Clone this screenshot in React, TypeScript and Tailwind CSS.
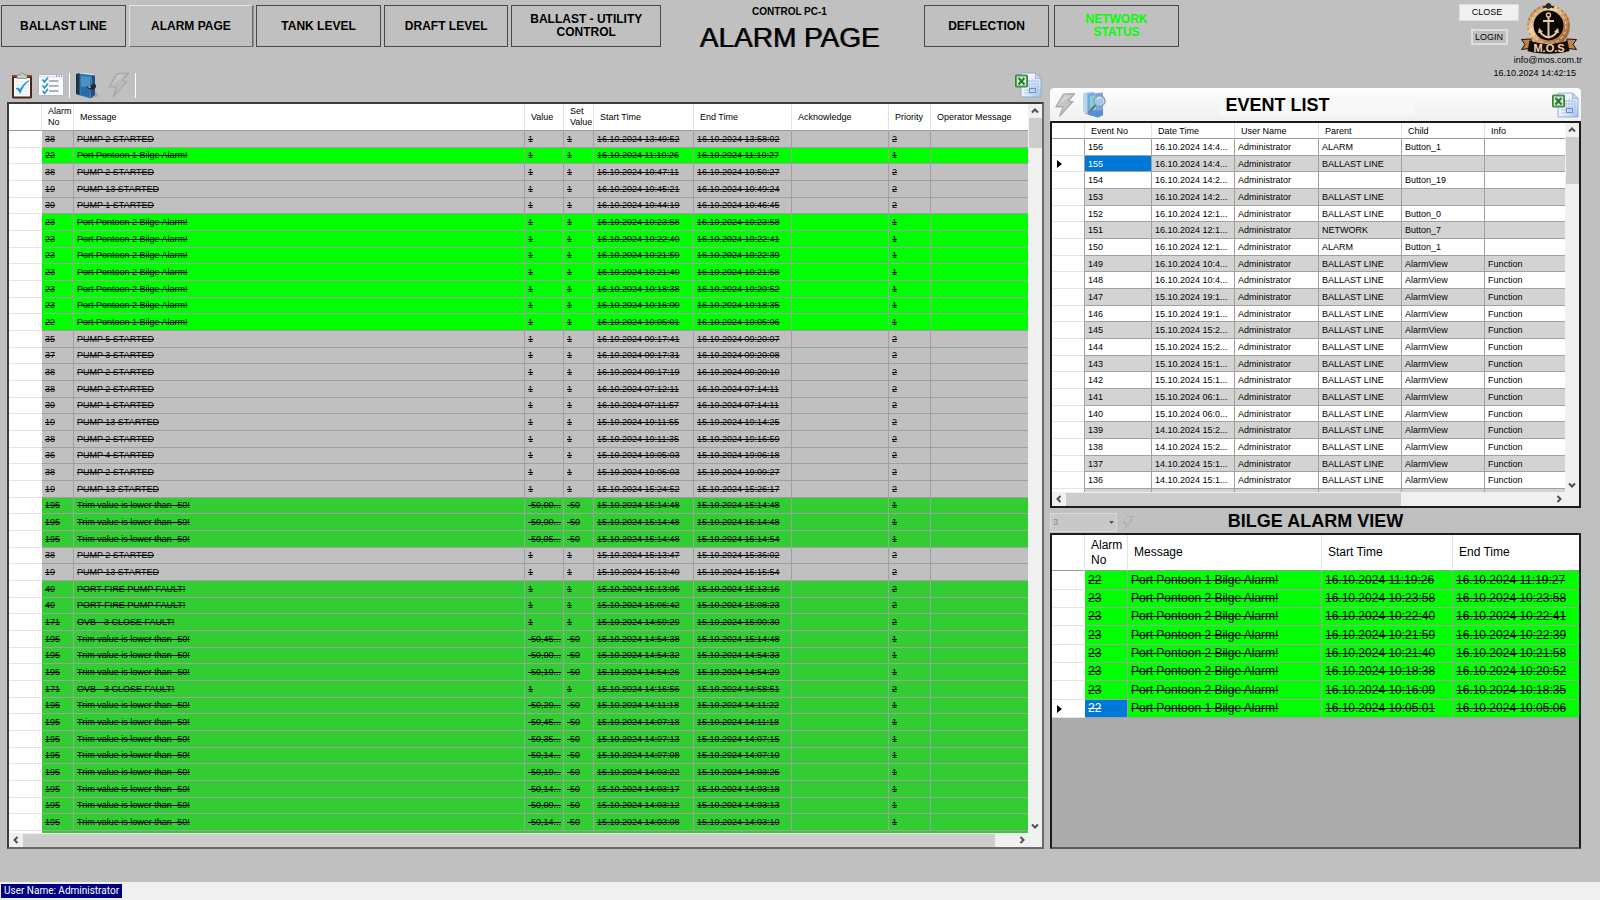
import React from "react";

type Tone = "idle" | "lime" | "green";
type Alarm = [no: string, message: string, value: string, set: string, start: string, end: string, priority: string, tone: Tone];

const pump = (no: string, n: number, start: string, end: string): Alarm => [no, `PUMP ${n} STARTED`, "1", "1", start, end, "2", "idle"];
const bilge = (no: string, n: number, start: string, end: string): Alarm => [no, `Port Pontoon ${n} Bilge Alarm!`, "1", "1", start, end, "1", "lime"];
const fault = (no: string, what: string, start: string, end: string): Alarm => [no, `${what} FAULT!`, "1", "1", start, end, "2", "green"];
const trim = (value: string, start: string, end: string): Alarm => ["195", "Trim value is lower than -50!", value, "-50", start, end, "1", "green"];

const alarms: Alarm[] = [
  pump("38", 2, "16.10.2024 13:49:52", "16.10.2024 13:58:02"),
  bilge("22", 1, "16.10.2024 11:19:26", "16.10.2024 11:19:27"),
  pump("38", 2, "16.10.2024 10:47:11", "16.10.2024 10:50:27"),
  pump("19", 13, "16.10.2024 10:45:21", "16.10.2024 10:49:24"),
  pump("39", 1, "16.10.2024 10:44:19", "16.10.2024 10:46:45"),
  bilge("23", 2, "16.10.2024 10:23:58", "16.10.2024 10:23:58"),
  bilge("23", 2, "16.10.2024 10:22:40", "16.10.2024 10:22:41"),
  bilge("23", 2, "16.10.2024 10:21:59", "16.10.2024 10:22:39"),
  bilge("23", 2, "16.10.2024 10:21:40", "16.10.2024 10:21:58"),
  bilge("23", 2, "16.10.2024 10:18:38", "16.10.2024 10:20:52"),
  bilge("23", 2, "16.10.2024 10:16:09", "16.10.2024 10:18:35"),
  bilge("22", 1, "16.10.2024 10:05:01", "16.10.2024 10:05:06"),
  pump("35", 5, "16.10.2024 09:17:41", "16.10.2024 09:20:07"),
  pump("37", 3, "16.10.2024 09:17:31", "16.10.2024 09:20:08"),
  pump("38", 2, "16.10.2024 09:17:19", "16.10.2024 09:20:10"),
  pump("38", 2, "16.10.2024 07:12:11", "16.10.2024 07:14:11"),
  pump("39", 1, "16.10.2024 07:11:57", "16.10.2024 07:14:11"),
  pump("19", 13, "15.10.2024 19:11:55", "15.10.2024 19:14:25"),
  pump("38", 2, "15.10.2024 19:11:35", "15.10.2024 19:16:59"),
  pump("36", 4, "15.10.2024 19:05:03", "15.10.2024 19:06:18"),
  pump("38", 2, "15.10.2024 19:05:03", "15.10.2024 19:09:27"),
  pump("19", 13, "15.10.2024 15:24:52", "15.10.2024 15:26:17"),
  trim("-50,00...", "15.10.2024 15:14:48", "15.10.2024 15:14:48"),
  trim("-50,00...", "15.10.2024 15:14:48", "15.10.2024 15:14:48"),
  trim("-50,05...", "15.10.2024 15:14:48", "15.10.2024 15:14:54"),
  pump("38", 2, "15.10.2024 15:13:47", "15.10.2024 15:36:02"),
  pump("19", 13, "15.10.2024 15:13:40", "15.10.2024 15:15:54"),
  fault("49", "PORT FIRE PUMP", "15.10.2024 15:13:06", "15.10.2024 15:13:16"),
  fault("49", "PORT FIRE PUMP", "15.10.2024 15:06:42", "15.10.2024 15:08:23"),
  fault("171", "OVB - 3 CLOSE", "15.10.2024 14:59:29", "15.10.2024 15:00:30"),
  trim("-50,45...", "15.10.2024 14:54:38", "15.10.2024 15:14:48"),
  trim("-50,00...", "15.10.2024 14:54:32", "15.10.2024 14:54:33"),
  trim("-50,10...", "15.10.2024 14:54:26", "15.10.2024 14:54:29"),
  fault("171", "OVB - 3 CLOSE", "15.10.2024 14:16:56", "15.10.2024 14:58:51"),
  trim("-50,29...", "15.10.2024 14:11:18", "15.10.2024 14:11:22"),
  trim("-50,45...", "15.10.2024 14:07:18", "15.10.2024 14:11:18"),
  trim("-50,35...", "15.10.2024 14:07:13", "15.10.2024 14:07:15"),
  trim("-50,14...", "15.10.2024 14:07:08", "15.10.2024 14:07:10"),
  trim("-50,19...", "15.10.2024 14:03:22", "15.10.2024 14:03:25"),
  trim("-50,14...", "15.10.2024 14:03:17", "15.10.2024 14:03:18"),
  trim("-50,09...", "15.10.2024 14:03:12", "15.10.2024 14:03:13"),
  trim("-50,14...", "15.10.2024 14:03:08", "15.10.2024 14:03:10"),
];

const bilgeAlarms = alarms.filter((a) => a[7] === "lime");

const view = (no: string, time: string) => [no, time, "Administrator", "BALLAST LINE", "AlarmView", "Function"];
const events: string[][] = [
  ["156", "16.10.2024 14:4...", "Administrator", "ALARM", "Button_1", ""],
  ["155", "16.10.2024 14:4...", "Administrator", "BALLAST LINE", "", ""],
  ["154", "16.10.2024 14:2...", "Administrator", "", "Button_19", ""],
  ["153", "16.10.2024 14:2...", "Administrator", "BALLAST LINE", "", ""],
  ["152", "16.10.2024 12:1...", "Administrator", "BALLAST LINE", "Button_0", ""],
  ["151", "16.10.2024 12:1...", "Administrator", "NETWORK", "Button_7", ""],
  ["150", "16.10.2024 12:1...", "Administrator", "ALARM", "Button_1", ""],
  view("149", "16.10.2024 10:4..."),
  view("148", "16.10.2024 10:4..."),
  view("147", "15.10.2024 19:1..."),
  view("146", "15.10.2024 19:1..."),
  view("145", "15.10.2024 15:2..."),
  view("144", "15.10.2024 15:2..."),
  view("143", "15.10.2024 15:1..."),
  view("142", "15.10.2024 15:1..."),
  view("141", "15.10.2024 06:1..."),
  view("140", "15.10.2024 06:0..."),
  view("139", "14.10.2024 15:2..."),
  view("138", "14.10.2024 15:2..."),
  view("137", "14.10.2024 15:1..."),
  view("136", "14.10.2024 15:1..."),
];

const toneClass: Record<Tone, string> = { idle: "bg-[#c0c0c0]", lime: "bg-[#00ff00]", green: "bg-[#32cd32]" };

function NavButton({ children, className = "", raised = false }: { children: React.ReactNode; className?: string; raised?: boolean }) {
  const edge = raised
    ? "border-t-[#e3e3e3] border-l-[#e3e3e3] border-r-[#696969] border-b-[#696969] shadow-[1px_0_0_#8c8c8c]"
    : "border-[#484848]";
  return (
    <button type="button" className={`flex h-[42px] min-w-0 items-center justify-center border bg-[#c0c0c0] px-3 text-center text-[12px] leading-[13px] font-bold ${edge} ${className}`}>
      {children}
    </button>
  );
}

function Chevron({ dir }: { dir: "up" | "down" | "left" | "right" }) {
  const d = { up: "M4 8.500 7 5.500l3 3", down: "M4 5.500l3 3 3-3", left: "M8.500 4 5.500 7l3 3", right: "M5.500 4l3 3-3 3" }[dir];
  return (
    <svg viewBox="0 0 14 14" className="size-[14px] shrink-0" fill="none" stroke="#505050" strokeWidth="2">
      <path d={d} />
    </svg>
  );
}

function VScroll({ thumb }: { thumb: string }) {
  return (
    <div className="flex w-[14px] shrink-0 flex-col items-center bg-[#f0f0f0]">
      <Chevron dir="up" />
      <div className={`w-[13px] bg-[#cdcdcd] ${thumb}`} />
      <div className="flex-1" />
      <Chevron dir="down" />
    </div>
  );
}

function HScroll({ thumb }: { thumb: string }) {
  return (
    <div className="flex h-[14px] shrink-0 items-center bg-[#f0f0f0] pr-[13px]">
      <Chevron dir="left" />
      <div className="flex h-[13px] min-w-0 flex-1">
        <div className={`bg-[#cdcdcd] ${thumb}`} />
      </div>
      <Chevron dir="right" />
    </div>
  );
}

function Pointer() {
  return (
    <svg viewBox="0 0 5 8" className="ml-[5px] h-2 w-[5px]">
      <path d="M0 0l5 4-5 4z" fill="#000" />
    </svg>
  );
}

function ClipboardIcon() {
  return (
    <svg viewBox="0 0 22 27" className="h-[27px] w-[22px]">
      <rect x="1" y="3" width="20" height="23.5" rx="1.5" fill="#4b2318" />
      <rect x="1" y="3" width="20" height="2" rx="1" fill="#7a4a38" />
      <rect x="3" y="6" width="16" height="18.5" fill="#fbfdff" />
      <path d="M4 10h14M4 13h14M4 16h14M4 19h14M4 22h14" stroke="#d5dde6" strokeWidth=".8" />
      <path d="M6 6.5V3.8c0-.7.5-1 1-1h2c0-2.400 4-2.400 4 0h2c.6 0 1 .3 1 1v2.700z" fill="#c9c9c9" stroke="#808080" strokeWidth=".7" />
      <path d="M5 16.500c2 1 3 2.600 4.200 4.800C11 16 13.500 12 18 8.500c-3.500 1.500-6.500 5-8.800 9C8 16.500 6.800 15.800 5 16.500z" fill="#1e8fe0" stroke="#1e8fe0" strokeWidth=".8" />
    </svg>
  );
}

function ChecklistIcon() {
  return (
    <svg viewBox="0 0 26 22" className="h-[22px] w-[26px]">
      <rect x=".5" y=".5" width="25" height="21" rx="1" fill="#fbfcfd" stroke="#b4b8bd" />
      <path d="M1 2.500h24" stroke="#dfe3e8" strokeWidth="1.500" />
      <path d="M18 2h1.200M20.500 2h1.200M23 2h1.200" stroke="#4a6fa0" strokeWidth="1.200" />
      <path d="M4.500 5.500 6.500 8 10 3.500M4.500 11.500 6.500 14 10 9.500M4.500 17 6.500 19.500 10 15" fill="none" stroke="#2490dc" strokeWidth="1.700" />
      <path d="M11 7h9.500M11 12h9.500M11 17h9.500" stroke="#606a74" strokeWidth="1.100" />
    </svg>
  );
}

function BookIcon() {
  return (
    <svg viewBox="0 0 23 27" className="h-[27px] w-[23px]">
      <path d="M14 26l8.500-1.500v-3L18 19z" fill="#000" opacity=".15" />
      <path d="M4 .8 15 1.500l5 1.500v20l-5 3.500-11-3z" fill="#dbe6ee" />
      <path d="M4 1.500 17 3 15.500 26.500 4 23.200z" fill="#2f77b0" />
      <path d="M6 4l9.500 1-.8 8.500L6 15z" fill="#5ba2d2" opacity=".65" />
      <path d="M6 16l8.500-1-.5 10-8-2z" fill="#1f5f98" opacity=".5" />
      <path d="M1 2 4.500 1v22.300L1 22z" fill="#20303e" />
      <path d="M17 3 20 3.500v19.500l-4.500 3.500z" fill="#1d4f7c" />
      <path d="M12 14.800c2.500-.3 4-1.300 6-2.800 2-.8 3.500 1 3 3-.3 1.500-2 2-4 2.500-2.500.5-4.500-.7-5-2.700z" fill="#25292e" />
      <circle cx="14.500" cy="15" r="1.200" fill="#9aa5b0" />
    </svg>
  );
}

function BoltIcon({ className, faint = false }: { className: string; faint?: boolean }) {
  return (
    <svg viewBox="0 0 23 26" className={className}>
      <path d="M10 1.500 21.500 1 15 9l5 .3L6 24.500 9.500 15 2 15z" fill={faint ? "#bcbcbc" : "#c4c4c4"} stroke={faint ? "#a6a6a6" : "#a8a8a8"} strokeWidth="1.200" strokeLinejoin="round" />
      <path d="M10.800 3 17.500 2.700 5 13.300z" fill="#fff" opacity={faint ? 0.2 : 0.3} />
    </svg>
  );
}

function ExcelIcon() {
  return (
    <svg viewBox="0 0 27 26" className="h-[26px] w-[27px]">
      <defs>
        <linearGradient id="sheet" x1="0" y1="0" x2="1" y2="1">
          <stop offset="0" stopColor="#ffffff" />
          <stop offset=".6" stopColor="#e2edfb" />
          <stop offset="1" stopColor="#9dbde9" />
        </linearGradient>
      </defs>
      <path d="M6 1h14.500L26 6.500V25H6z" fill="url(#sheet)" stroke="#8da9cf" strokeWidth=".9" />
      <path d="M20.500 1v5.500H26z" fill="#c7dbf5" stroke="#8da9cf" strokeWidth=".7" />
      <path d="M13 9h10M13 12h10M13 15h10M9 18h14M9 21h14M14 8v13M17 7v14M20 7v14M23 8v13" stroke="#a3bde3" strokeWidth=".8" />
      <rect x="14.500" y="16.500" width="6" height="4" fill="none" stroke="#6f93c9" />
      <rect x=".5" y="3" width="12" height="12" rx=".8" fill="#58a05c" stroke="#3b8142" />
      <rect x="2" y="4.500" width="9" height="9" fill="#d3e8cf" />
      <path d="M3.500 6l6 6.500M9.300 6 3.500 12.500" stroke="#2a7a33" strokeWidth="2" />
    </svg>
  );
}

function BookSearchIcon() {
  return (
    <svg viewBox="0 0 25 27" className="h-[27px] w-[25px]">
      <path d="M2 2 12 1v24L3 23z" fill="#8fb9e2" />
      <path d="M1 3 5 2v20l-4-1z" fill="#bcd3ec" />
      <path d="M6 3l15-1.500V24l-5 2.500L6 23.500z" fill="#79a9dc" />
      <path d="M8 5l6-.5v14L8 19z" fill="#7fd2d6" />
      <path d="M6 20l15-1v5l-5 2.500L6 23.500z" fill="#5a8fd0" />
      <path d="M13.500 14 8.500 19.500" stroke="#6a6f78" strokeWidth="2" strokeLinecap="round" />
      <circle cx="17.500" cy="10" r="5.500" fill="#b9d3ee" fillOpacity=".7" stroke="#8b97a8" strokeWidth="1.300" />
      <path d="M15 8.500c1-2 3-2.500 4.500-1.500" stroke="#fff" fill="none" />
    </svg>
  );
}

function Logo() {
  return (
    <svg viewBox="0 0 56 51" className="h-[51px] w-[56px]">
      <defs>
        <linearGradient id="bronze" x1="0" y1="0" x2="1" y2="1">
          <stop offset="0" stopColor="#a06a36" />
          <stop offset=".35" stopColor="#f3cfa0" />
          <stop offset=".6" stopColor="#c98f56" />
          <stop offset="1" stopColor="#8a5526" />
        </linearGradient>
      </defs>
      <circle cx="27.500" cy="23" r="21.500" fill="url(#bronze)" />
      <circle cx="27.500" cy="23" r="20.500" fill="none" stroke="#7a4a22" strokeWidth="1.500" strokeDasharray="2 3" opacity=".45" />
      <circle cx="27.500" cy="23" r="17.500" fill="none" stroke="#fbe3c0" strokeWidth="1.500" strokeDasharray="3 2.500" opacity=".55" />
      <circle cx="27.500" cy="22.500" r="15" fill="#0a0604" />
      <circle cx="27.500" cy="3" r="2.400" fill="#3b3b3b" stroke="#151515" />
      <path d="M22 4.500c3-1.500 8-1.500 11 0" stroke="#222" strokeWidth="2" fill="none" />
      <g fill="none" stroke="#edc79c" strokeWidth="2">
        <circle cx="27.500" cy="12" r="2" strokeWidth="1.400" />
        <path d="M27.500 14V34M22 18h11" />
        <path d="M18.500 27c1 4.500 5 6.500 9 7.500 4-1 8-3 9-7.500" />
      </g>
      <path d="M17 30l1-5 4 4zM38 30l-1-5-4 4z" fill="#edc79c" />
      <path d="M.5 36.500 10 36l2 9-11.500 1.500 3.500-5zM55.500 36.500 46 36l-2 9 11.500 1.500-3.500-5z" fill="#c08246" stroke="#1a0d05" />
      <path d="M8.500 37.500c11 4.500 27 4.500 38 0l2 10.500c-12 3.500-30 3.500-42 0z" fill="#120a05" />
      <text x="28" y="49" textAnchor="middle" fontFamily="Liberation Sans, sans-serif" fontWeight="700" fontSize="11" fill="#f4d7b0">M.O.S</text>
    </svg>
  );
}

const headCell = "border-r border-b border-r-[#e2e2e2] border-b-[#9a9a9a] bg-white pl-[6px] text-left align-middle font-normal last:border-r-0";

function AlarmTable() {
  return (
    <div className="flex min-h-0 flex-1 flex-col border-2 border-[#6a6a6a] border-t-[#3c3c3c] border-l-[#3c3c3c] bg-[#ababab]">
      <div className="flex min-h-0 flex-1">
        <div className="min-w-0 flex-1 overflow-hidden">
          <table className="w-full table-fixed border-separate border-spacing-0 text-[9px] leading-[11px]">
            <colgroup>
              <col className="w-[33px]" />
              <col className="w-8" />
              <col />
              <col className="w-[39px]" />
              <col className="w-[30px]" />
              <col className="w-[100px]" />
              <col className="w-[98px]" />
              <col className="w-[97px]" />
              <col className="w-[42px]" />
              <col className="w-[97px]" />
            </colgroup>
            <thead>
              <tr className="h-[27px] whitespace-nowrap">
                <th className={headCell} aria-label="Row marker" />
                <th className={headCell}>Alarm<br />No</th>
                <th className={headCell}>Message</th>
                <th className={headCell}>Value</th>
                <th className={headCell}>Set<br />Value</th>
                <th className={headCell}>Start Time</th>
                <th className={headCell}>End Time</th>
                <th className={headCell}>Acknowledge</th>
                <th className={headCell}>Priority</th>
                <th className={headCell}>Operator Message</th>
              </tr>
            </thead>
            <tbody>
              {alarms.map(([no, message, value, set, start, end, priority, tone], i) => (
                <tr key={i} className={`whitespace-nowrap ${i % 3 === 1 ? "h-4" : "h-[17px]"}`}>
                  <td className="border-b border-[#e4e4e4] bg-white" />
                  {[no, message, value, set, start, end, "", priority, ""].map((text, c) => (
                    <td key={c} className={`border-r border-b border-[#a0a0a0] pl-[3px] line-through last:border-r-0 ${toneClass[tone]}`}>
                      {text}
                    </td>
                  ))}
                </tr>
              ))}
              <tr className="h-4">
                <td className="bg-white" />
                <td colSpan={9} className="bg-[#32cd32]" />
              </tr>
            </tbody>
          </table>
        </div>
        <VScroll thumb="h-[30px]" />
      </div>
      <HScroll thumb="w-[98%]" />
    </div>
  );
}

function EventTable() {
  return (
    <div className="flex h-[387px] flex-col border-2 border-[#1c1c1c] bg-white">
      <div className="flex min-h-0 flex-1">
        <div className="min-w-0 flex-1 overflow-hidden">
          <table className="w-full table-fixed border-separate border-spacing-0 text-[9px] leading-[12px]">
            <colgroup>
              <col className="w-[33px]" />
              <col className="w-[67px]" />
              <col className="w-[83px]" />
              <col className="w-[84px]" />
              <col className="w-[83px]" />
              <col className="w-[83px]" />
              <col />
            </colgroup>
            <thead>
              <tr className="h-4 whitespace-nowrap">
                <th className={headCell} aria-label="Row marker" />
                {["Event No", "Date Time", "User Name", "Parent", "Child", "Info"].map((t) => (
                  <th key={t} className={headCell}>{t}</th>
                ))}
              </tr>
            </thead>
            <tbody>
              {events.map((row, i) => (
                <tr key={row[0]} className={`whitespace-nowrap ${i % 3 === 1 ? "h-4" : "h-[17px]"}`}>
                  <td className="border-r border-b border-r-[#a0a0a0] border-b-[#e4e4e4] bg-white">{i === 1 && <Pointer />}</td>
                  {row.map((text, c) => (
                    <td
                      key={c}
                      className={`border-r border-b border-[#a0a0a0] pl-[3px] last:border-r-0 ${
                        i === 1 && c === 0 ? "bg-[#0078d7] text-white" : i % 2 ? "bg-[#d3d3d3]" : "bg-white"
                      }`}
                    >
                      {text}
                    </td>
                  ))}
                </tr>
              ))}
              <tr className="h-4">
                <td className="border-r border-[#a0a0a0] bg-white" />
                {[0, 1, 2, 3, 4, 5].map((c) => (
                  <td key={c} className="border-r border-[#a0a0a0] bg-[#d3d3d3] last:border-r-0" />
                ))}
              </tr>
            </tbody>
          </table>
        </div>
        <VScroll thumb="h-[47px]" />
      </div>
      <HScroll thumb="w-[69%]" />
    </div>
  );
}

function BilgeTable() {
  return (
    <div className="min-h-0 flex-1 overflow-hidden border-2 border-[#1c1c1c] border-b-[#5a5a5a] bg-[#ababab]">
      <table className="w-full table-fixed border-separate border-spacing-0 text-[12px] leading-[15px]">
        <colgroup>
          <col className="w-[33px]" />
          <col className="w-[43px]" />
          <col />
          <col className="w-[131px]" />
          <col className="w-[126px]" />
        </colgroup>
        <thead>
          <tr className="h-9">
            <th className={headCell} aria-label="Row marker" />
            <th className={headCell}>Alarm<br />No</th>
            <th className={headCell}>Message</th>
            <th className={headCell}>Start Time</th>
            <th className={headCell}>End Time</th>
          </tr>
        </thead>
        <tbody>
          {bilgeAlarms.map(([no, message, , , start, end], i) => (
            <tr key={i} className={`whitespace-nowrap ${i % 3 === 0 ? "h-[19px]" : "h-[18px]"}`}>
              <td className="border-b border-[#e4e4e4] bg-white">{i === bilgeAlarms.length - 1 && <Pointer />}</td>
              {[no, message, start, end].map((text, c) => (
                <td
                  key={c}
                  className={`border-r border-b border-[#a0a0a0] pl-[3px] line-through last:border-r-0 ${
                    i === bilgeAlarms.length - 1 && c === 0 ? "bg-[#0078d7] text-white" : "bg-[#00ff00]"
                  }`}
                >
                  {text}
                </td>
              ))}
            </tr>
          ))}
        </tbody>
      </table>
    </div>
  );
}

export default function App() {
  return (
    <div className="flex h-screen min-h-[700px] flex-col overflow-hidden bg-[#c0c0c0] font-['Liberation_Sans',Arial,sans-serif] text-black">
      <header className="flex h-[70px] shrink-0 items-start pr-[18px] pl-px">
        <nav className="grid w-[660px] grid-cols-[5fr_5fr_5fr_5fr_6fr] gap-[3px] pt-[5px]">
          <NavButton>BALLAST LINE</NavButton>
          <NavButton raised>ALARM PAGE</NavButton>
          <NavButton>TANK LEVEL</NavButton>
          <NavButton>DRAFT LEVEL</NavButton>
          <NavButton>BALLAST - UTILITY CONTROL</NavButton>
        </nav>
        <div className="flex w-[263px] flex-col items-center pt-[5px] pr-[6px]">
          <div className="text-[10px] leading-[13px] font-bold">CONTROL PC-1</div>
          <h1 className="pt-1 text-[28px] leading-8 whitespace-nowrap [text-shadow:1px_0_0_#000000b0]">ALARM PAGE</h1>
        </div>
        <nav className="grid w-[255px] grid-cols-2 gap-[5px] pt-[5px]">
          <NavButton>DEFLECTION</NavButton>
          <NavButton className="text-[#00ff00]">NETWORK STATUS</NavButton>
        </nav>
        <div className="ml-auto flex flex-col items-end text-[9px] leading-[13px]">
          <div className="flex gap-[2px] pr-[5px]">
            <div className="flex w-[60px] flex-col items-center gap-2 pt-1">
              <button type="button" className="h-[17px] w-full border border-[#dcdcdc] bg-[#f0f0f0] pr-1">CLOSE</button>
              <button type="button" className="h-4 w-[37px] border-2 border-[#dedede] bg-[#c0c0c0] leading-3">LOGIN</button>
            </div>
            <div className="pt-[3px]"><Logo /></div>
          </div>
          <a href="mailto:info@mos.com.tr">info@mos.com.tr</a>
          <time className="pr-[6px]">16.10.2024 14:42:15</time>
        </div>
      </header>

      <main className="grid min-h-0 flex-1 grid-cols-[minmax(0,1037fr)_minmax(0,531fr)] gap-[6px] pr-[19px] pb-[33px] pl-[7px]">
        <section className="flex min-h-0 flex-col">
          <div className="flex h-8 shrink-0 items-center gap-[5px] pb-[2px] pl-1">
            <button type="button" aria-label="Acknowledge"><ClipboardIcon /></button>
            <button type="button" aria-label="Acknowledge list"><ChecklistIcon /></button>
            <div className="h-[25px] w-px bg-white" />
            <button type="button" aria-label="Alarm history"><BookIcon /></button>
            <button type="button" aria-label="Refresh" disabled className="pl-1"><BoltIcon faint className="h-[26px] w-[23px]" /></button>
            <div className="h-[25px] w-px bg-white" />
            <button type="button" aria-label="Export alarms" className="ml-auto pr-[2px]"><ExcelIcon /></button>
          </div>
          <AlarmTable />
        </section>

        <section className="flex min-h-0 flex-col pt-[18px]">
          <div className="grid h-[33px] shrink-0 grid-cols-[1fr_auto_1fr] items-center rounded-t-[4px] bg-gradient-to-b from-[#fdfdfd] to-[#f0f0f0] pr-[2px] pl-1">
            <div className="flex items-center gap-[6px]">
              <button type="button" aria-label="Refresh events" disabled><BoltIcon className="h-[26px] w-[22px]" /></button>
              <button type="button" aria-label="Search events"><BookSearchIcon /></button>
            </div>
            <h2 className="bg-[#f8f8f8] px-[6px] pr-[84px] text-[18px] leading-5 font-bold">EVENT LIST</h2>
            <button type="button" aria-label="Export events" className="justify-self-end"><ExcelIcon /></button>
          </div>
          <EventTable />
          <div className="grid h-[25px] shrink-0 grid-cols-[1fr_auto_1fr] items-center">
            <div className="flex items-center gap-[5px] pt-1">
              <div className="relative">
                <select aria-label="Alarm group" disabled className="block h-[19px] w-[67px] appearance-none border border-[#d8d8d8] bg-[#c8c8c8] pl-[2px] text-[9px] leading-none text-[#8a8a8a]">
                  <option>3</option>
                </select>
                <svg viewBox="0 0 5 3" className="pointer-events-none absolute top-2 right-[3px] h-[3px] w-[5px]"><path d="M0 0h5L2.500 3z" fill="#555" /></svg>
              </div>
              <BoltIcon faint className="h-[13px] w-3" />
            </div>
            <h2 className="text-[18px] leading-5 font-bold">BILGE ALARM VIEW</h2>
            <div />
          </div>
          <BilgeTable />
        </section>
      </main>

      <footer className="flex h-[18px] shrink-0 items-center bg-[#f0f0f0] pl-px">
        <span className="bg-[#000080] px-[3px] font-[Roboto,sans-serif] text-[10px] leading-[14px] text-white">User Name: Administrator</span>
      </footer>
    </div>
  );
}
